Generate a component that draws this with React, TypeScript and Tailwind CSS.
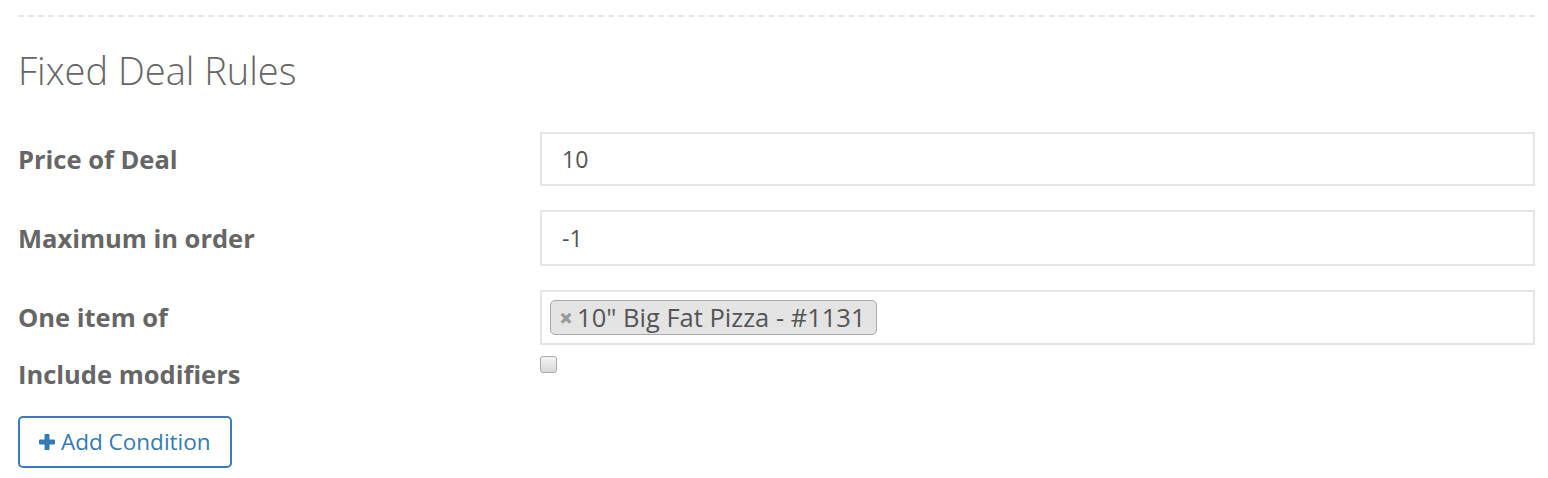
import { useState } from "react";

function Field({ label, children }: { label: string; children: React.ReactNode }) {
  return (
    <div className="flex items-center">
      <div className="w-[522px] shrink-0 text-[25.5px] font-bold text-[#666]">{label}</div>
      <div className="flex-1">{children}</div>
    </div>
  );
}

export default function App() {
  const [price, setPrice] = useState("10");
  const [max, setMax] = useState("-1");
  const [items, setItems] = useState(['10" Big Fat Pizza - #1131']);
  const [mods, setMods] = useState(false);

  return (
    <div className="w-[1548px] h-[478px] bg-white pl-[18px] pr-[13px] pt-[15px] font-['Open_Sans',sans-serif]">
      <div className="border-t-2 border-dashed border-[#e3e8ec]" />

      <h2 className="mt-[29px] text-[38px] font-light leading-[48px] text-[#666]">Fixed Deal Rules</h2>

      <div className="mt-[38px] flex flex-col gap-[24px]">
        <Field label="Price of Deal">
          <input
            value={price}
            onChange={(e) => setPrice(e.target.value)}
            className="h-[54px] w-full border-2 border-[#e5e5e5] px-[20px] text-[23px] text-[#555] outline-none"
          />
        </Field>
        <Field label="Maximum in order">
          <input
            value={max}
            onChange={(e) => setMax(e.target.value)}
            className="h-[56px] w-full border-2 border-[#e5e5e5] px-[20px] text-[23px] text-[#555] outline-none"
          />
        </Field>
        <Field label="One item of">
          <div className="flex h-[55px] w-full items-center gap-2 border-2 border-[#e5e5e5] px-[8px]">
            {items.map((it) => (
              <span
                key={it}
                className="flex h-[35px] items-center rounded-[5px] border border-[#aaa] bg-[#e4e4e4] pl-[8px] pr-[10px] text-[25.5px] leading-none text-[#555]"
              >
                <button
                  onClick={() => setItems(items.filter((x) => x !== it))}
                  className="mr-[4px] text-[24px] font-extrabold leading-none text-[#999]"
                >
                  ×
                </button>
                {it}
              </span>
            ))}
          </div>
        </Field>
      </div>

      <div className="mt-[11px] flex items-start">
        <div className="w-[522px] shrink-0 pt-[1px] text-[25.5px] font-bold leading-[34px] text-[#666]">Include modifiers</div>
        <button
          onClick={() => setMods(!mods)}
          className="h-[17px] w-[17px] rounded-[3px] border border-[#aaa] bg-gradient-to-b from-[#f4f4f4] to-[#d8d8d8]"
        >
          {mods && <span className="block text-[12px] leading-[15px] text-[#333]">✓</span>}
        </button>
      </div>

      <button className="mt-[25px] flex h-[52px] items-center gap-[6px] rounded-[5px] border-2 border-[#3a7bbf] px-[19px] text-[22.5px] text-[#337ab7]">
        <svg width="16" height="16" viewBox="0 0 16 16" fill="#337ab7">
          <rect x="5.5" y="0" width="5" height="16" rx="1" />
          <rect x="0" y="5.5" width="16" height="5" rx="1" />
        </svg>
        Add Condition
      </button>
    </div>
  );
}
